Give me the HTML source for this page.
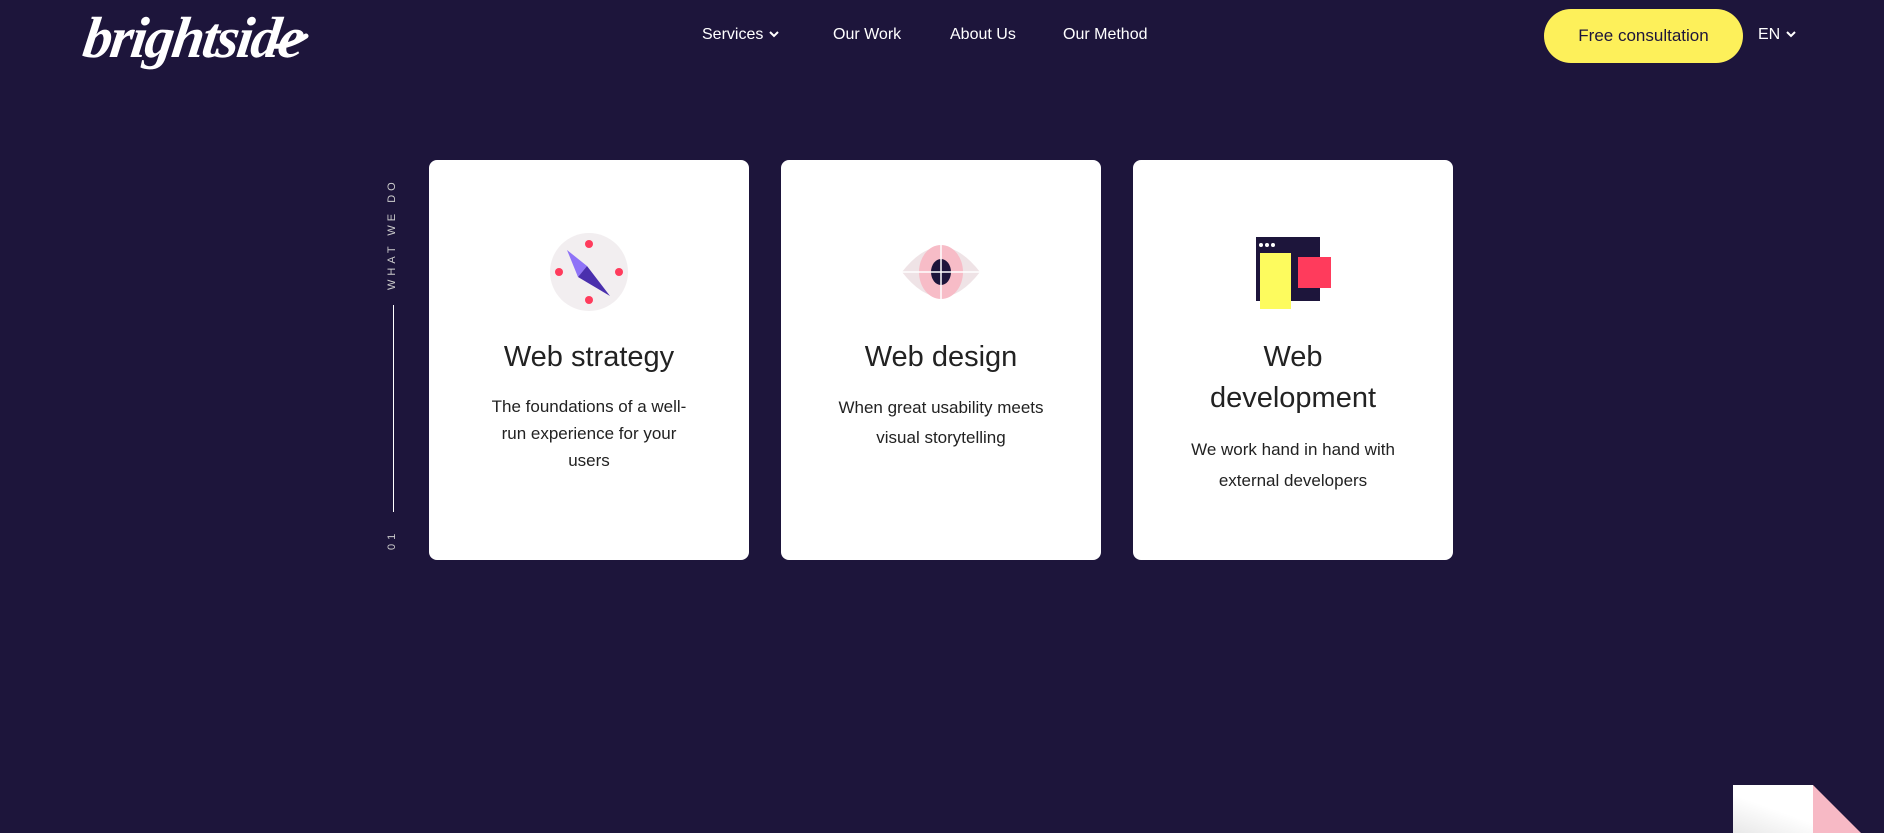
<!DOCTYPE html>
<html><head><meta charset="utf-8"><style>
*{margin:0;padding:0;box-sizing:border-box}
body{width:1884px;height:833px;background:#1d153b;font-family:"Liberation Sans",sans-serif;position:relative;overflow:hidden;color:#fff}
.nav{position:absolute;top:26px;font-size:16px;color:#fff}
.btn{position:absolute;left:1544px;top:9px;width:199px;height:54px;border-radius:27px;background:#fdf05a;color:#1d153b;font-size:17px;display:flex;align-items:center;justify-content:center}
.card{position:absolute;top:160px;width:320px;height:400px;background:#fff;border-radius:8px;color:#222;text-align:center}
.t{position:absolute;left:0;right:0;font-size:29px;line-height:41px;color:#222}
.d{position:absolute;left:20px;right:20px;font-size:17px;line-height:27px;color:#222}
.vt{position:absolute;left:386px;font-size:11px;letter-spacing:4px;color:#ccc;transform:rotate(-90deg);transform-origin:left top;white-space:nowrap}
</style></head><body>
<div style="position:absolute;left:84px;top:4px;font-family:'Liberation Serif',serif;font-style:italic;font-weight:bold;font-size:58px;letter-spacing:-2px;color:#fff;transform:skewX(-8deg)">brightside</div>
<svg style="position:absolute;left:270px;top:28px" width="40" height="22"><path d="M2 18 Q18 20 36 8" stroke="#fff" stroke-width="5" fill="none" stroke-linecap="round"/></svg>
<div class="nav" style="left:702px">Services <svg width="12" height="10" viewBox="0 0 12 10"><path d="M2 3l4 4 4-4" stroke="#fff" stroke-width="2" fill="none"/></svg></div>
<div class="nav" style="left:833px">Our Work</div>
<div class="nav" style="left:950px">About Us</div>
<div class="nav" style="left:1063px">Our Method</div>
<div class="btn">Free consultation</div>
<div class="nav" style="left:1758px">EN <svg width="12" height="10" viewBox="0 0 12 10"><path d="M2 3l4 4 4-4" stroke="#fff" stroke-width="2" fill="none"/></svg></div>

<div class="vt" style="top:290px">WHAT WE DO</div>
<div style="position:absolute;left:393px;top:305px;width:1px;height:207px;background:#fff"></div>
<div class="vt" style="top:550px">01</div>

<div class="card" style="left:429px">
<svg style="position:absolute;left:120px;top:72px" width="80" height="80" viewBox="0 0 80 80"><circle cx="40" cy="40" r="39" fill="#f2eef0"/><circle cx="40" cy="12" r="4" fill="#ff3b5c"/><circle cx="40" cy="68" r="4" fill="#ff3b5c"/><circle cx="10" cy="40" r="4" fill="#ff3b5c"/><circle cx="70" cy="40" r="4" fill="#ff3b5c"/><path d="M18 18L38 34 29 45Z" fill="#8f73f7"/><path d="M38 34L61 64 29 45Z" fill="#4a2fad"/></svg>
<div class="t" style="top:177px">Web strategy</div>
<div class="d" style="top:233px">The foundations of a well-<br>run experience for your<br>users</div>
</div>
<div class="card" style="left:781px">
<svg style="position:absolute;left:120px;top:82px" width="80" height="60" viewBox="0 0 80 60"><path d="M1 30Q40 -20 79 30Q40 80 1 30Z" fill="#efe3e6"/><ellipse cx="40" cy="30" rx="22" ry="27" fill="#f7bcc7"/><ellipse cx="40" cy="30" rx="10" ry="13" fill="#1d153b"/><path d="M1 30H79M40 0V60" stroke="#fff" stroke-width="1.5"/></svg>
<div class="t" style="top:177px">Web design</div>
<div class="d" style="top:233px;line-height:30px">When great usability meets<br>visual storytelling</div>
</div>
<div class="card" style="left:1133px">
<svg style="position:absolute;left:122px;top:76px" width="80" height="80" viewBox="0 0 80 80"><rect x="1" y="1" width="64" height="64" fill="#1d153b"/><circle cx="6" cy="9" r="2" fill="#fff"/><circle cx="12" cy="9" r="2" fill="#fff"/><circle cx="18" cy="9" r="2" fill="#fff"/><rect x="5" y="17" width="31" height="56" fill="#fdfb5e"/><rect x="43" y="21" width="33" height="31" fill="#ff3b5c"/></svg>
<div class="t" style="top:177px">Web<br>development</div>
<div class="d" style="top:274px;line-height:31px">We work hand in hand with<br>external developers</div>
</div>

<div style="position:absolute;left:1733px;top:785px;width:80px;height:48px;background:linear-gradient(20deg,#e8e8e8,#fff 50%)"></div>
<svg style="position:absolute;left:1813px;top:785px" width="60" height="48"><path d="M0 0L48 48H0Z" fill="#f7b9c5"/></svg>
</body></html>
